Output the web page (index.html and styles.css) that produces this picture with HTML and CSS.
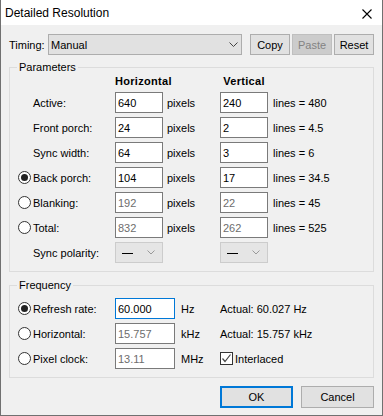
FILE: index.html
```html
<!DOCTYPE html>
<html lang="en">
<head>
    <meta charset="UTF-8">
    <meta name="viewport" content="width=device-width, initial-scale=1.0">
    <title>Detailed Resolution</title>
    <link rel="stylesheet" href="styles.css">
</head>
<body>

    <div class="window">
        <div class="titlebar">
            <span class="title">Detailed Resolution</span>
            <svg class="close" width="10" height="10" viewBox="0 0 10 10">
                <path d="M0.5 0.5 L9.5 9.5 M9.5 0.5 L0.5 9.5" stroke="#000" stroke-width="1.1" fill="none"/>
            </svg>
        </div>

        <div class="content">
            <div class="timing-row">
                <span class="timing-label">Timing:</span>
                <div class="combo timing-combo">
                    <span>Manual</span>
                    <svg width="9" height="5" viewBox="0 0 9 5"><polyline points="0.5,0.5 4.5,4.5 8.5,0.5" stroke="#444" fill="none"/></svg>
                </div>
                <button class="btn">Copy</button>
                <button class="btn" disabled>Paste</button>
                <button class="btn">Reset</button>
            </div>

            <div class="group params">
                <span class="group-title">Parameters</span>
                <div class="param-grid">
                    <span></span><span></span>
                    <span class="col-head">Horizontal</span>
                    <span></span>
                    <span class="col-head">Vertical</span>
                    <span></span>

                    <span></span><span>Active:</span>
                    <input class="field" type="text" value="640">
                    <span class="unit">pixels</span>
                    <input class="field" type="text" value="240">
                    <span class="lines">lines = 480</span>

                    <span></span><span>Front porch:</span>
                    <input class="field" type="text" value="24">
                    <span class="unit">pixels</span>
                    <input class="field" type="text" value="2">
                    <span class="lines">lines = 4.5</span>

                    <span></span><span>Sync width:</span>
                    <input class="field" type="text" value="64">
                    <span class="unit">pixels</span>
                    <input class="field" type="text" value="3">
                    <span class="lines">lines = 6</span>

                    <input class="radio" type="radio" name="param" checked><span>Back porch:</span>
                    <input class="field" type="text" value="104">
                    <span class="unit">pixels</span>
                    <input class="field" type="text" value="17">
                    <span class="lines">lines = 34.5</span>

                    <input class="radio" type="radio" name="param"><span>Blanking:</span>
                    <input class="field dim" type="text" value="192">
                    <span class="unit">pixels</span>
                    <input class="field dim" type="text" value="22">
                    <span class="lines">lines = 45</span>

                    <input class="radio" type="radio" name="param"><span>Total:</span>
                    <input class="field dim" type="text" value="832">
                    <span class="unit">pixels</span>
                    <input class="field dim" type="text" value="262">
                    <span class="lines">lines = 525</span>

                    <span></span><span>Sync polarity:</span>
                    <div class="combo polarity">
                        <span class="dash"></span>
                        <svg width="8" height="5" viewBox="0 0 8 5"><polyline points="0.5,0.5 4,4 7.5,0.5" stroke="#999" fill="none"/></svg>
                    </div>
                    <span></span>
                    <div class="combo polarity">
                        <span class="dash"></span>
                        <svg width="8" height="5" viewBox="0 0 8 5"><polyline points="0.5,0.5 4,4 7.5,0.5" stroke="#999" fill="none"/></svg>
                    </div>
                    <span></span>
                </div>
            </div>

            <div class="group freq">
                <span class="group-title">Frequency</span>
                <div class="freq-grid">
                    <input class="radio" type="radio" name="freq" checked><span>Refresh rate:</span>
                    <input class="field wide focus" type="text" value="60.000">
                    <span class="hz">Hz</span>
                    <span>Actual: 60.027 Hz</span>

                    <input class="radio" type="radio" name="freq"><span>Horizontal:</span>
                    <input class="field wide dim" type="text" value="15.757">
                    <span class="hz">kHz</span>
                    <span>Actual: 15.757 kHz</span>

                    <input class="radio" type="radio" name="freq"><span>Pixel clock:</span>
                    <input class="field wide dim" type="text" value="13.11">
                    <span class="hz">MHz</span>
                    <label class="check">
                        <span class="checkbox">
                            <svg width="11" height="11" viewBox="0 0 11 11"><polyline points="1.5,5.5 4,8.5 9.5,1.5" stroke="#444" stroke-width="1.2" fill="none"/></svg>
                        </span>
                        Interlaced
                    </label>
                </div>
            </div>

            <div class="dialog-buttons">
                <button class="dlg-btn default">OK</button>
                <button class="dlg-btn">Cancel</button>
            </div>
        </div>
    </div>

</body>
</html>
```

FILE: styles.css
```css
* {
    box-sizing: border-box;
}
body {
    margin: 0;
    background-color: #fff;
    font-family: "Liberation Sans", Arial, sans-serif;
    font-size: 11px;
    color: #000;
}
.window {
    width: 383px;
    height: 416px;
    border: 1px solid #707070;
    border-top: none;
    background-color: #f0f0f0;
    display: flex;
    flex-direction: column;
}
/* Title bar */
.titlebar {
    height: 25px;
    flex: none;
    background-color: #fff;
    display: flex;
    align-items: center;
    justify-content: space-between;
    padding: 0 10px 0 4px;
}
.title {
    font-size: 12px;
}
.close {
    display: block;
    margin-top: 3px;
}
.content {
    padding: 9px 8px 7px;
    display: flex;
    flex-direction: column;
}
/* Timing row */
.timing-row {
    display: flex;
    align-items: center;
    height: 21px;
}
.timing-label {
    width: 39px;
}
.combo {
    height: 21px;
    border: 1px solid #adadad;
    background-color: #e1e1e1;
    display: flex;
    align-items: center;
    justify-content: space-between;
}
.combo svg {
    display: block;
}
.timing-combo {
    width: 194px;
    padding: 0 3px 0 2px;
    margin-right: 8px;
}
.btn {
    width: 40px;
    height: 21px;
    padding: 0;
    border: 1px solid #adadad;
    background-color: #e1e1e1;
    font: inherit;
    color: #000;
}
.btn + .btn {
    margin-left: 2px;
}
.btn:disabled {
    background-color: #cccccc;
    border-color: #bfbfbf;
    color: #838383;
}
/* Group boxes */
.group {
    position: relative;
    border: 1px solid #dcdcdc;
}
.group-title {
    position: absolute;
    top: -7px;
    left: 7px;
    padding: 0 2px;
    line-height: 13px;
    background-color: #f0f0f0;
}
.params {
    margin-top: 12px;
    padding: 6px 0 8px 8px;
}
.freq {
    margin-top: 13px;
    padding: 12px 0 8px 8px;
}
.param-grid {
    display: grid;
    grid-template-columns: 15px 82px 48px 57px 48px 1fr;
    grid-template-rows: 14px;
    grid-auto-rows: 21px;
    row-gap: 4px;
    align-items: center;
}
.freq-grid {
    display: grid;
    grid-template-columns: 15px 82px 60px 45px 1fr;
    grid-auto-rows: 21px;
    row-gap: 4px;
    align-items: center;
}
.col-head {
    font-weight: bold;
    letter-spacing: 0.3px;
    text-align: center;
}
.unit {
    padding-left: 4px;
}
.lines {
    padding-left: 5px;
}
.hz {
    padding-left: 6px;
}
/* Inputs */
.field {
    width: 48px;
    height: 21px;
    margin: 0;
    padding: 0 2px;
    border: 1px solid #7a7a7a;
    background-color: #fff;
    font: inherit;
    color: #000;
    outline: none;
}
.field.wide {
    width: 60px;
}
.field.dim {
    color: #6d6d6d;
}
.field.focus {
    border-color: #0078d7;
}
.polarity {
    width: 48px;
    background-color: #e5e5e5;
    border-color: #cccccc;
    padding: 0 7px 0 6px;
}
.dash {
    width: 11px;
    height: 1px;
    margin-top: 1px;
    background-color: #000;
}
.radio {
    appearance: none;
    width: 13px;
    height: 13px;
    margin: 0;
    border: 1px solid #333;
    border-radius: 50%;
    background-color: #fff;
    display: grid;
    place-content: center;
}
.radio:checked::before {
    content: "";
    width: 7px;
    height: 7px;
    border-radius: 50%;
    background-color: #222;
}
.check {
    display: flex;
    align-items: center;
    gap: 2px;
}
.checkbox {
    width: 13px;
    height: 13px;
    border: 1px solid #333;
    background-color: #fff;
    display: flex;
    align-items: center;
    justify-content: center;
}
.checkbox svg {
    display: block;
}
/* OK / Cancel */
.dialog-buttons {
    display: flex;
    justify-content: flex-end;
    gap: 8px;
    margin-top: 8px;
}
.dlg-btn {
    width: 73px;
    height: 22px;
    padding: 0;
    border: 1px solid #adadad;
    background-color: #e1e1e1;
    font: inherit;
    color: #000;
}
.dlg-btn.default {
    border: 2px solid #0078d7;
}
```
